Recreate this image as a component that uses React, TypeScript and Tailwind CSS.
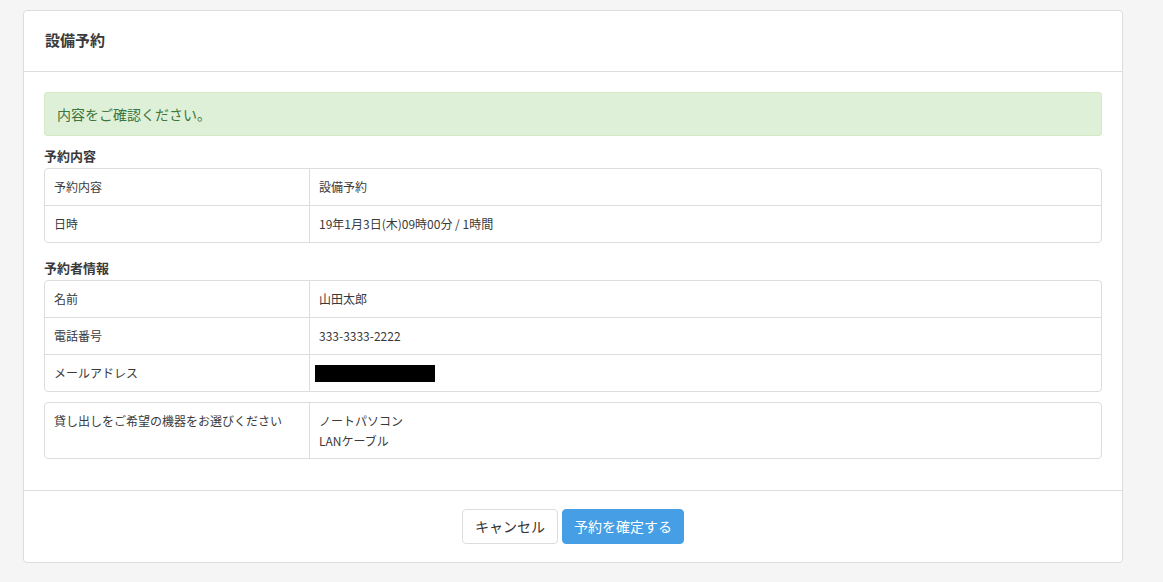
import React from "react";

const font = { fontFamily: '"Noto Sans CJK JP", "Noto Sans", sans-serif' };

function Row({ label, children, last, tall }: { label: string; children: React.ReactNode; last?: boolean; tall?: boolean }) {
  return (
    <div className={`flex ${last ? "" : "border-b border-[#ddd]"}`}>
      <div className={`w-[265px] shrink-0 border-r border-[#ddd] pl-[9px] ${tall ? "pt-[8px] h-[55px]" : "h-[36px] flex items-center"} text-[12px] leading-[20px] text-[#3a3a3a]`}>
        {label}
      </div>
      <div className={`flex-1 pl-[9px] ${tall ? "pt-[8px] h-[55px]" : "h-[36px] flex items-center"} text-[12px] leading-[20px] text-[#3a3a3a]`}>
        {children}
      </div>
    </div>
  );
}

export default function App() {
  return (
    <div className="min-h-[582px] w-full bg-[#f5f5f5] pt-[10px] pl-[23px]" style={font}>
      <div className="w-[1100px] h-[553px] bg-white border border-[#ddd] rounded-[4px] flex flex-col">
        <div className="h-[61px] border-b border-[#ddd] flex items-center pl-[21px]">
          <h1 className="text-[15px] font-bold text-[#3a3a3a] leading-[20px] mt-[-2px]">設備予約</h1>
        </div>
        <div className="px-[20px] pt-[20px] pb-[31px] border-b border-[#ddd]">
          <div className="h-[44px] bg-[#dff0d8] border border-[#d6e9c6] rounded-[3px] flex items-center pl-[12px] text-[14px] text-[#3c763d]">
            内容をご確認ください。
          </div>
          <div className="h-[32px] pt-[10px] text-[13px] font-bold text-[#3a3a3a] leading-[20px]">予約内容</div>
          <div className="border border-[#ddd] rounded-[4px]">
            <Row label="予約内容">設備予約</Row>
            <Row label="日時" last>19年1月3日(木)09時00分 / 1時間</Row>
          </div>
          <div className="h-[37px] pt-[15px] text-[13px] font-bold text-[#3a3a3a] leading-[20px]">予約者情報</div>
          <div className="border border-[#ddd] rounded-[4px]">
            <Row label="名前">山田太郎</Row>
            <Row label="電話番号">333-3333-2222</Row>
            <Row label="メールアドレス" last>
              <div className="w-[120px] h-[17px] bg-black ml-[-4px]" />
            </Row>
          </div>
          <div className="mt-[10px] border border-[#ddd] rounded-[4px]">
            <Row label="貸し出しをご希望の機器をお選びください" last tall>
              <div>ノートパソコン</div>
              <div>LANケーブル</div>
            </Row>
          </div>
        </div>
        <div className="flex-1 flex justify-center items-start pt-[18px] gap-[4px]">
          <button className="h-[35px] w-[96px] bg-white border border-[#ddd] rounded-[4px] text-[14px] text-[#333]">キャンセル</button>
          <button className="h-[35px] w-[122px] bg-[#469fe5] border border-[#469fe5] rounded-[4px] text-[14px] text-white">予約を確定する</button>
        </div>
      </div>
    </div>
  );
}
